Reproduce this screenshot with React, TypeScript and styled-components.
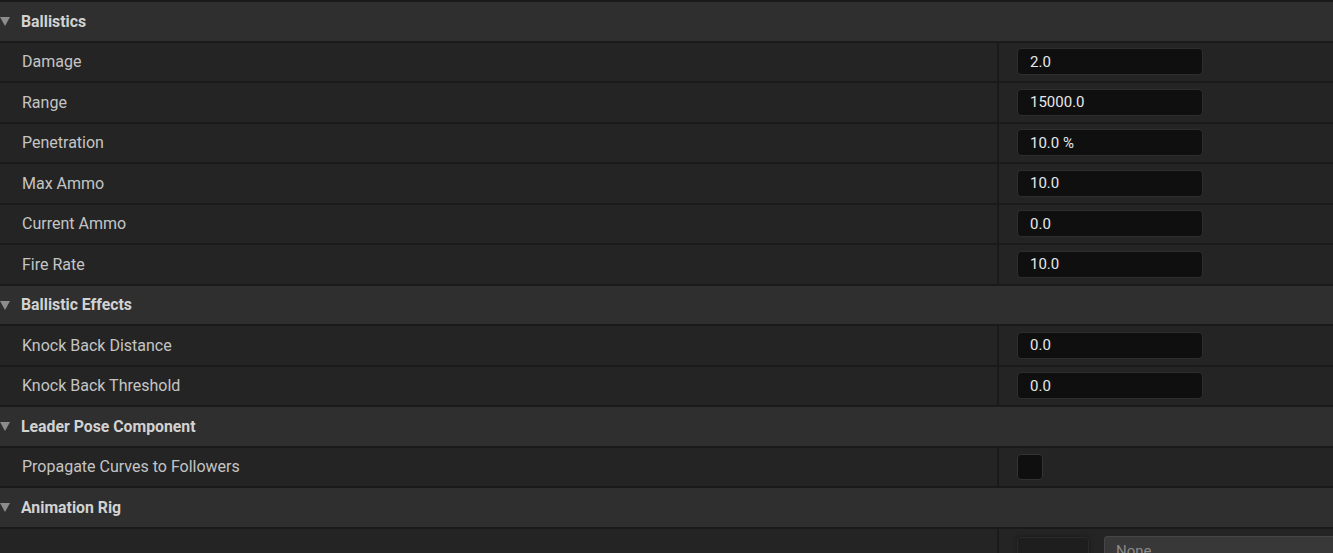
import styled, { createGlobalStyle } from "styled-components";

const GlobalStyle = createGlobalStyle`
    html, body {
        margin: 0;
        padding: 0;
        background: #242424;
        overflow: hidden;
    }
    body {
        font-family: Roboto, "Noto Sans", sans-serif;
    }
`;

const Panel = styled.div`
    width: 1333px;
    height: 553px;
    overflow: hidden;
    border-top: 2px solid #1a1a1a;
    box-sizing: border-box;
    background: #242424;
`;

const CategoryRow = styled.div`
    display: flex;
    align-items: center;
    height: 38.5px;
    background: #2f2f2f;
    border-bottom: 2px solid #1a1a1a;
    color: #d2d2d2;
    font-size: 15.8px;
    font-weight: 700;
`;

const Arrow = styled.span`
    width: 0;
    height: 0;
    margin-right: 11px;
    margin-top: 1px;
    border-left: 5.5px solid transparent;
    border-right: 5.5px solid transparent;
    border-top: 9px solid #8c8c8c;
`;

const PropertyRow = styled.div`
    display: grid;
    grid-template-columns: 997px 2px 1fr;
    height: 38.5px;
    background: #242424;
    border-bottom: 2px solid #1a1a1a;
`;

const Label = styled.div`
    display: flex;
    align-items: center;
    padding-left: 22px;
    color: #c4c4c4;
    font-size: 16px;
`;

const Divider = styled.div`
    background: #1a1a1a;
`;

const ValueCell = styled.div<{ $top?: boolean }>`
    display: flex;
    align-items: ${(p) => (p.$top ? "flex-start" : "center")};
    padding-top: ${(p) => (p.$top ? "7px" : "0")};
    gap: 15px;
    padding-left: 18px;
`;

const NumberBox = styled.div`
    box-sizing: border-box;
    width: 186px;
    height: 27px;
    display: flex;
    align-items: center;
    padding-left: 12px;
    background: #0f0f0f;
    border: 1px solid #2e2e2e;
    border-radius: 4px;
    color: #e8e8e8;
    font-size: 15px;
`;

const CheckBox = styled.div`
    box-sizing: border-box;
    width: 26px;
    height: 26px;
    background: #0f0f0f;
    border: 1px solid #333;
    border-radius: 4px;
`;

const Swatch = styled.div`
    box-sizing: border-box;
    width: 72px;
    height: 28px;
    margin-top: 1px;
    background: #1e1e1e;
    border: 1px solid #2a2a2a;
    border-radius: 4px;
    box-shadow: 0 0 4px rgba(0, 0, 0, 0.4);
`;

const Dropdown = styled.div`
    box-sizing: border-box;
    flex: 1;
    height: 30px;
    padding: 5px 0 0 11px;
    background: #383838;
    border: 1px solid #464646;
    border-right: none;
    border-radius: 4px 0 0 4px;
    color: #8a8a8a;
    font-size: 15px;
`;

type Prop =
    | { kind: "number"; label: string; value: string }
    | { kind: "check"; label: string }
    | { kind: "asset"; label: string };

interface Category {
    title: string
    props: Prop[]
}

const categories: Category[] = [
    {
        title: "Ballistics",
        props: [
            { kind: "number", label: "Damage", value: "2.0" },
            { kind: "number", label: "Range", value: "15000.0" },
            { kind: "number", label: "Penetration", value: "10.0 %" },
            { kind: "number", label: "Max Ammo", value: "10.0" },
            { kind: "number", label: "Current Ammo", value: "0.0" },
            { kind: "number", label: "Fire Rate", value: "10.0" },
        ],
    },
    {
        title: "Ballistic Effects",
        props: [
            { kind: "number", label: "Knock Back Distance", value: "0.0" },
            { kind: "number", label: "Knock Back Threshold", value: "0.0" },
        ],
    },
    {
        title: "Leader Pose Component",
        props: [{ kind: "check", label: "Propagate Curves to Followers" }],
    },
    {
        title: "Animation Rig",
        props: [{ kind: "asset", label: "" }],
    },
];

function PropertyValue({ prop }: { prop: Prop }) {
    if (prop.kind === "number") return <NumberBox>{prop.value}</NumberBox>;
    if (prop.kind === "check") return <CheckBox />;
    return (
        <>
            <Swatch />
            <Dropdown>None</Dropdown>
        </>
    );
}

function App() {
    return (
        <Panel>
            <GlobalStyle />
            {categories.map((cat) => (
                <div key={cat.title}>
                    <CategoryRow>
                        <Arrow />
                        {cat.title}
                    </CategoryRow>
                    {cat.props.map((p, i) => (
                        <PropertyRow key={i}>
                            <Label>{p.label}</Label>
                            <Divider />
                            <ValueCell $top={p.kind === "asset"}>
                                <PropertyValue prop={p} />
                            </ValueCell>
                        </PropertyRow>
                    ))}
                </div>
            ))}
        </Panel>
    );
}

export default App;
